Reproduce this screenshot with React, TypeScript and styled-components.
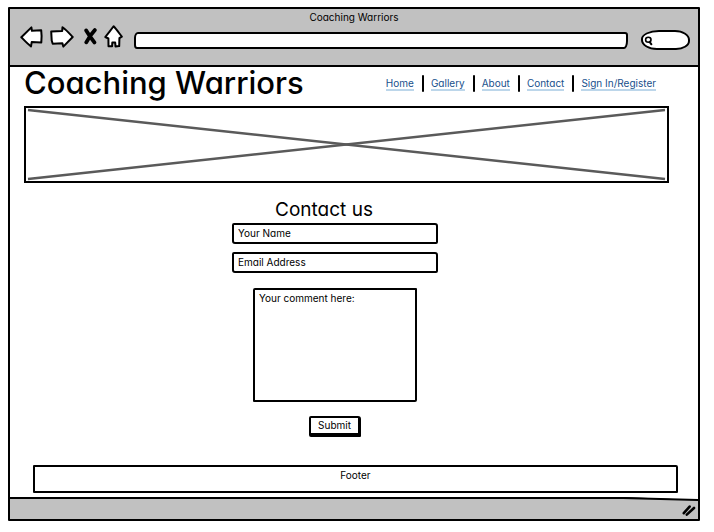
import React from "react";
import styled, { createGlobalStyle } from "styled-components";

const INK = "#000000";
const CHROME = "#c1c1c1";

const GlobalStyle = createGlobalStyle`
  *, *::before, *::after { box-sizing: border-box; }
  body {
    margin: 0;
    background: #ffffff;
    color: ${INK};
    font-family: Inter, "Liberation Sans", sans-serif;
    font-feature-settings: "cv11" 1;
    font-size: 10px;
    line-height: 16px;
  }
  input, textarea, button { font: inherit; font-feature-settings: inherit; color: inherit; }
`;

const BrowserWindow = styled.div`
  display: flex;
  flex-direction: column;
  margin: 7px 14px 12px 8px;
  border: 2px solid ${INK};
  border-radius: 1px;
`;

const Chrome = styled.header`
  background: ${CHROME};
  border-bottom: 2px solid ${INK};
  padding-bottom: 15px;
`;

const WindowTitle = styled.div`
  text-align: center;
`;

const Toolbar = styled.div`
  display: flex;
  align-items: center;
  padding: 0 8px 0 10px;
`;

const ToolButton = styled.button<{ $gap: number }>`
  display: block;
  flex: none;
  padding: 0;
  margin: 0 ${(p) => p.$gap}px 2px 0;
  border: 0;
  background: none;
  svg { display: block; }
`;

const AddressBar = styled.input`
  flex: 1;
  min-width: 0;
  height: 17px;
  margin-top: 5px;
  padding: 0 6px;
  border: 2px solid ${INK};
  border-radius: 4px 3px 4px 3px / 6px 3px 8px 4px;
  background: #ffffff;
`;

const SearchBox = styled.label`
  display: flex;
  align-items: center;
  flex: none;
  width: 49px;
  height: 20px;
  margin: 5px 0 0 13px;
  padding: 1px 0 0 1px;
  border: 2px solid ${INK};
  border-radius: 18px 15px 14px 16px / 9px 10px 9px 10px;
  background: #ffffff;
`;

const SearchInput = styled.input`
  flex: 1;
  min-width: 0;
  height: 12px;
  padding: 0;
  border: 0;
  background: none;
  outline: none;
`;

const Page = styled.div`
  display: flex;
  flex-direction: column;
  padding: 0 20px 4px 14px;
`;

const SiteHeader = styled.div`
  display: flex;
  align-items: center;
  justify-content: space-between;
  padding-right: 22px;
  height: 39px;
`;

const SiteName = styled.h1`
  margin: 0 0 7px;
  font-size: 31px;
  line-height: 32px;
  font-weight: 500;
  white-space: nowrap;
`;

const Nav = styled.nav`
  display: flex;
  align-items: center;
  margin-bottom: 6px;
  a {
    color: #17508c;
    line-height: 12px;
    text-decoration: none;
    white-space: nowrap;
    border-bottom: 2px solid #bcd6ea;
  }
`;

const Separator = styled.span`
  width: 2px;
  height: 17px;
  margin: 0 7px 0 8px;
  border-radius: 1px;
  background: ${INK};
`;

const Banner = styled.div`
  margin-right: 9px;
  border: 2px solid ${INK};
  padding: 2px;
  svg { display: block; width: 100%; height: 69px; overflow: visible; }
`;

const Form = styled.form`
  display: flex;
  flex-direction: column;
  align-items: center;
  padding: 15px 32px 28px 0;
`;

const FormTitle = styled.h2`
  margin: 0 22px 1px 0;
  font-size: 19px;
  line-height: 24px;
  font-weight: 400;
`;

const TextField = styled.input`
  width: 206px;
  height: 21px;
  margin-bottom: 8px;
  padding: 0 4px 2px;
  border: 2px solid ${INK};
  border-radius: 2px 3px 2px 3px;
  background: #ffffff;
  &::placeholder { color: ${INK}; opacity: 1; }
`;

const CommentField = styled.textarea`
  width: 164px;
  height: 114px;
  margin: 7px 0 14px;
  padding: 0 4px;
  border: 2px solid ${INK};
  border-radius: 2px 1px 2px 1px;
  background: #ffffff;
  resize: none;
  &::placeholder { color: ${INK}; opacity: 1; }
`;

const SubmitButton = styled.button`
  padding: 0 7px;
  border: solid ${INK};
  border-width: 2px 3px 4px 2px;
  border-radius: 2px 3px 1px 2px;
  background: #ffffff;
  line-height: 15px;
`;

const Footer = styled.footer`
  min-height: 28px;
  margin-left: 9px;
  border: 2px solid ${INK};
  border-radius: 1px 2px 1px 1px;
  text-align: center;
`;

const StatusBar = styled.div`
  position: relative;
  display: flex;
  align-items: flex-start;
  justify-content: flex-end;
  height: 22px;
  padding: 6px 2px 0 0;
  border-top: 2px solid ${INK};
  background: ${CHROME};
  svg { display: block; }
`;

const SlopedEdge = styled.svg`
  position: absolute;
  top: -2px;
  right: 0;
`;

const outline = {
  fill: "#ffffff",
  stroke: INK,
  strokeWidth: 2,
  strokeLinejoin: "round" as const,
  strokeLinecap: "round" as const,
};

const BackIcon = () => (
  <svg width="23" height="22" viewBox="0 0 23 22" aria-hidden="true">
    <path {...outline} d="M1.300 11.200 11.400 1.400 11.900 4.800 21.200 4.300 21.600 10 21.300 16.500 11.700 16.100 11 20.400C7.500 17.800 4.500 14.500 1.300 11.200Z" />
  </svg>
);

const ForwardIcon = () => (
  <svg width="24" height="22" viewBox="0 0 24 22" aria-hidden="true">
    <path {...outline} d="M1.200 5.500 12.200 5 12.500 1.200C16.500 4 19.500 7.500 22.700 11L13.300 20.600 12.400 17.200 2.700 17.700 1.700 14.500Z" />
  </svg>
);

const StopIcon = () => (
  <svg width="13" height="18" viewBox="0 0 13 18" aria-hidden="true">
    <path fill="none" stroke={INK} strokeWidth="3.800" strokeLinecap="round" d="M2.200 2.400Q5 7 10.400 14.400M10.800 2.100Q6.500 6.500 2.300 14.300" />
  </svg>
);

const HomeIcon = () => (
  <svg width="19" height="23" viewBox="0 0 19 23" aria-hidden="true">
    <path {...outline} d="M9.600 1.300C12.500 4.300 15 8 17.800 11.600L15.400 13.200 15.200 21.100 11.500 21.400 11.200 17.500 8.300 17.500 8.100 21.300 4.500 21.300 4.400 13.500 1.300 12C4 8.300 7 5 9.600 1.300Z" />
  </svg>
);

const MagnifierIcon = () => (
  <svg width="9" height="10" viewBox="0 0 9 10" aria-hidden="true">
    <ellipse cx="4.300" cy="3.800" rx="2.700" ry="2.500" fill="none" stroke={INK} strokeWidth="1.600" />
    <path fill="none" stroke={INK} strokeWidth="2" strokeLinecap="round" d="M5.600 5.800 7.400 8.300" />
  </svg>
);

const ResizeGrip = () => (
  <svg width="14" height="12" viewBox="0 0 14 12" aria-hidden="true">
    <path fill="none" stroke={INK} strokeWidth="2.600" strokeLinecap="round" d="M1.800 8.200 7.600 1.600M4.800 9.600 12 3" />
  </svg>
);

const links = ["Home", "Gallery", "About", "Contact", "Sign In/Register"];

export default function App() {
  return (
    <>
      <GlobalStyle />
      <BrowserWindow>
        <Chrome>
          <WindowTitle>Coaching Warriors</WindowTitle>
          <Toolbar>
            <ToolButton $gap={7} aria-label="Back"><BackIcon /></ToolButton>
            <ToolButton $gap={10} aria-label="Forward"><ForwardIcon /></ToolButton>
            <ToolButton $gap={7} aria-label="Stop"><StopIcon /></ToolButton>
            <ToolButton $gap={11} aria-label="Home"><HomeIcon /></ToolButton>
            <AddressBar type="text" aria-label="Address" />
            <SearchBox>
              <MagnifierIcon />
              <SearchInput type="text" aria-label="Search" />
            </SearchBox>
          </Toolbar>
        </Chrome>
        <Page>
          <SiteHeader>
            <SiteName>Coaching Warriors</SiteName>
            <Nav>
              {links.map((label, i) => (
                <React.Fragment key={label}>
                  {i > 0 && <Separator />}
                  <a href="#">{label}</a>
                </React.Fragment>
              ))}
            </Nav>
          </SiteHeader>
          <Banner>
            <svg aria-hidden="true">
              <g stroke="#5a5a5a" strokeWidth="2.400">
                <line x1="0" y1="0" x2="100%" y2="100%" />
                <line x1="0" y1="100%" x2="100%" y2="0" />
              </g>
            </svg>
          </Banner>
          <Form onSubmit={(e) => e.preventDefault()}>
            <FormTitle>Contact us</FormTitle>
            <TextField type="text" aria-label="Your Name" placeholder="Your Name" />
            <TextField type="email" aria-label="Email Address" placeholder="Email Address" />
            <CommentField aria-label="Your comment here:" placeholder="Your comment here:" />
            <SubmitButton type="submit">Submit</SubmitButton>
          </Form>
          <Footer>Footer</Footer>
        </Page>
        <StatusBar>
          <SlopedEdge width="75" height="5" viewBox="0 0 75 5" aria-hidden="true">
            <path fill="#ffffff" d="M0 0H75V3Z" />
            <path fill={INK} d="M0 0 75 2V4L0 2Z" />
          </SlopedEdge>
          <ResizeGrip />
        </StatusBar>
      </BrowserWindow>
    </>
  );
}
